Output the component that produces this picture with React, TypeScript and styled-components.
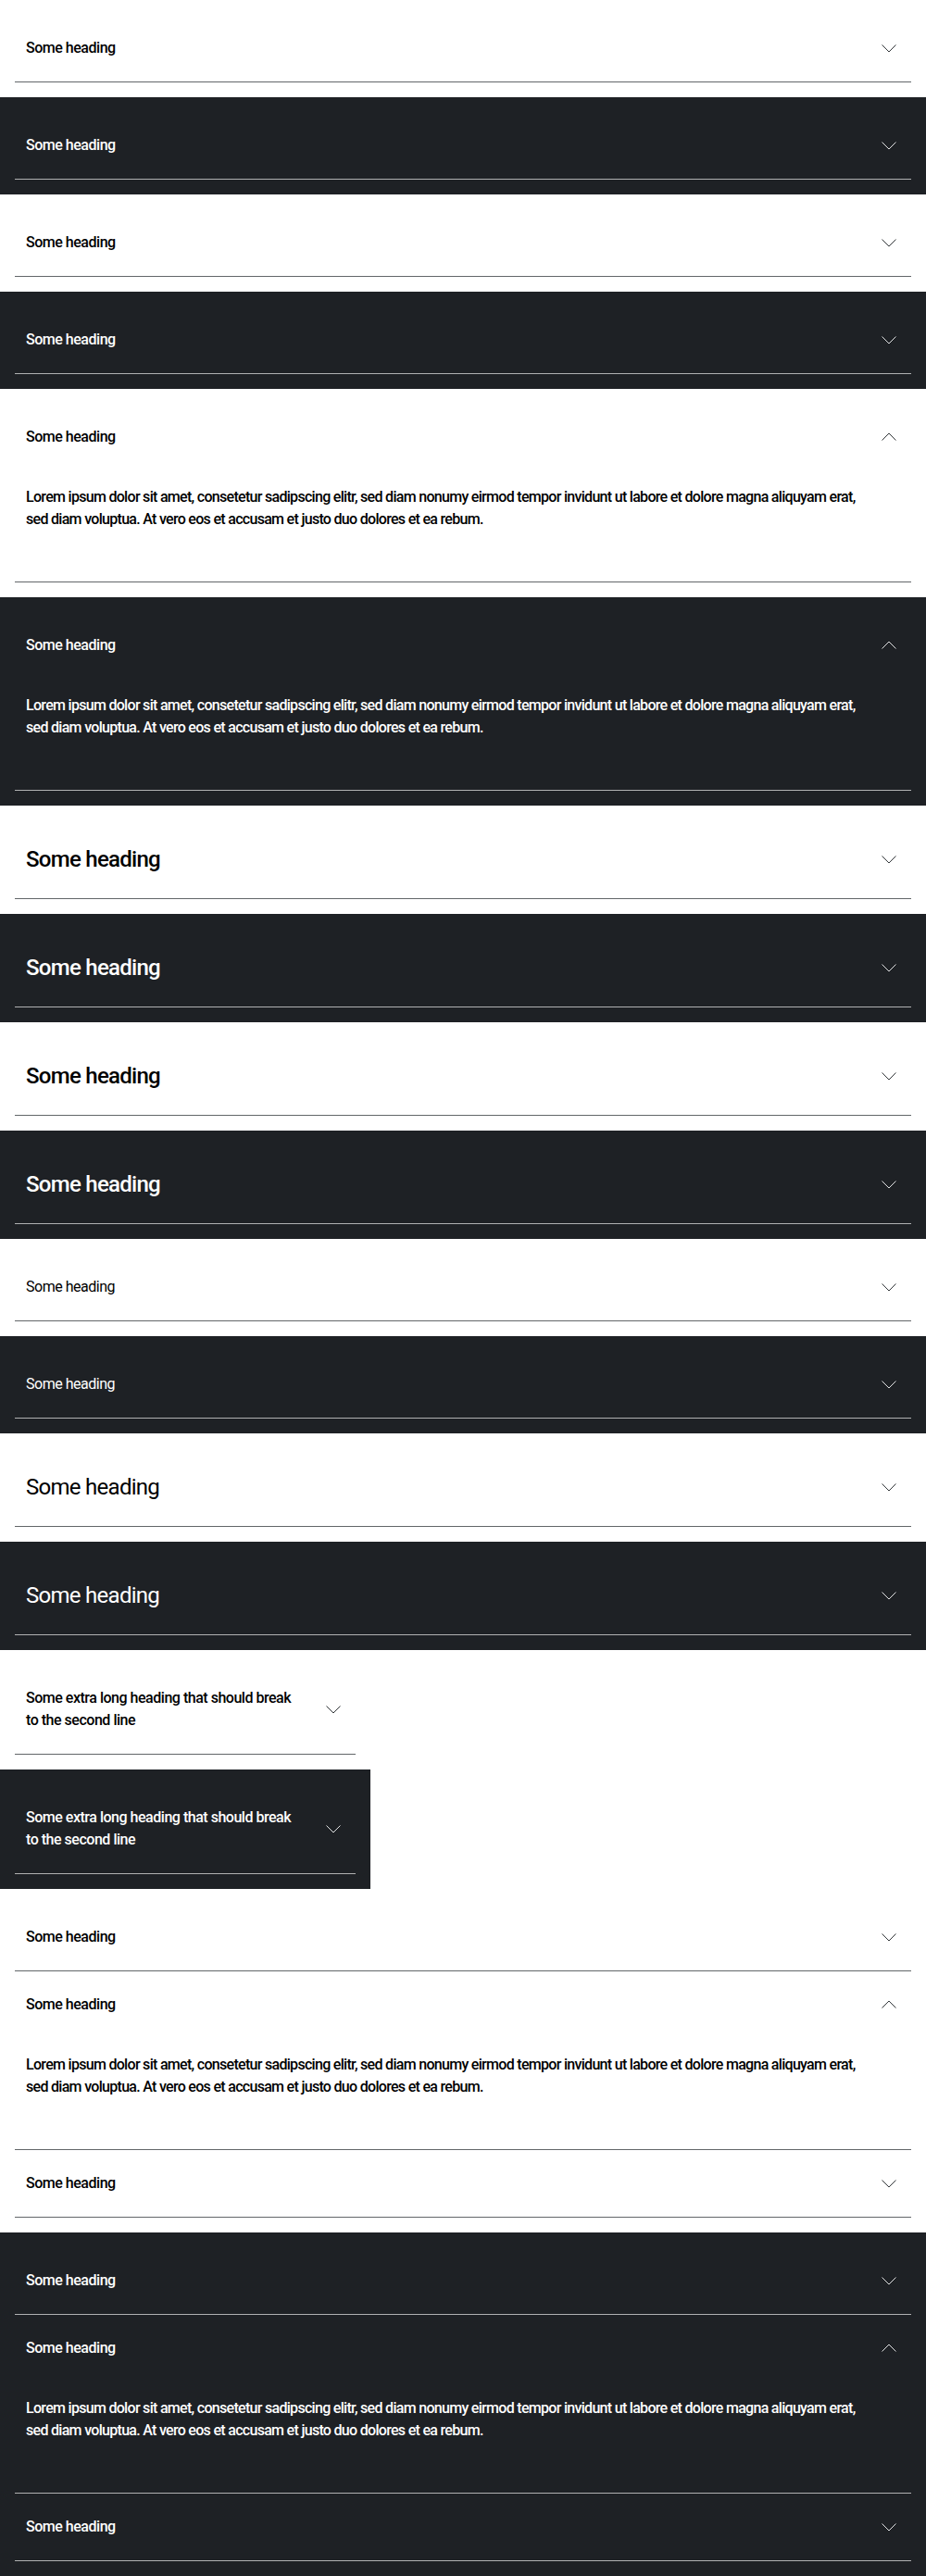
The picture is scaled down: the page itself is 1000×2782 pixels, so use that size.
import React from "react";
import styled, { createGlobalStyle, css } from "styled-components";

type Theme = "light" | "dark";
type Size = "small" | "medium";
type Weight = "regular" | "semibold";

const palette = {
  light: { bg: "#ffffff", text: "#000000", line: "#626669", icon: "#323639" },
  dark: { bg: "#1e2125", text: "#ffffff", line: "#b0b1b2", icon: "#e3e4e5" },
};

const GlobalStyle = createGlobalStyle`
  html, body {
    margin: 0;
    padding: 0;
    background: #ffffff;
  }
  body {
    font-family: Roboto, "Liberation Sans", Arial, sans-serif;
    -webkit-font-smoothing: antialiased;
  }
  * { box-sizing: border-box; }
`;

const Page = styled.main`
  display: flex;
  flex-direction: column;
  width: 1000px;
`;

const Section = styled.section<{ $theme: Theme; $narrow?: boolean }>`
  display: flex;
  flex-direction: column;
  padding: 16px;
  background: ${(p) => palette[p.$theme].bg};
  color: ${(p) => palette[p.$theme].text};
  width: ${(p) => (p.$narrow ? "400px" : "100%")};
`;

const Item = styled.div<{ $theme: Theme }>`
  display: flex;
  flex-direction: column;
  border-bottom: 1px solid ${(p) => palette[p.$theme].line};
`;

const Header = styled.button<{ $theme: Theme }>`
  display: flex;
  align-items: center;
  justify-content: space-between;
  gap: 24px;
  width: 100%;
  margin: 0;
  padding: 24px 12px;
  border: 0;
  background: transparent;
  color: inherit;
  font: inherit;
  text-align: left;
  cursor: pointer;

  svg {
    flex: 0 0 24px;
    color: ${(p) => palette[p.$theme].icon};
  }
`;

const Title = styled.span<{ $size: Size; $weight: Weight }>`
  flex: 1 1 auto;
  font-family: Roboto, "Liberation Sans", Arial, sans-serif;
  font-weight: ${(p) => (p.$weight === "semibold" ? 500 : 400)};
  letter-spacing: -0.03em;
  ${(p) =>
    p.$size === "medium"
      ? css`
          font-size: 24px;
          line-height: 36px;
        `
      : css`
          font-size: 16px;
          line-height: 24px;
        `}
`;

const Content = styled.div`
  padding: 17px 36px 55px 12px;
  font-family: Roboto, "Liberation Sans", Arial, sans-serif;
  font-size: 16px;
  line-height: 24px;
  font-weight: 500;
  letter-spacing: -0.7px;
`;

const Chevron: React.FC<{ open?: boolean }> = ({ open }) => (
  <svg width="24" height="24" viewBox="0 0 24 24" fill="none" aria-hidden="true">
    <path
      d={open ? "M4.5 15.5 L12 8 L19.5 15.5" : "M4.5 8.5 L12 16 L19.5 8.5"}
      stroke="currentColor"
      strokeWidth="1"
      fill="none"
    />
  </svg>
);

const LOREM =
  "Lorem ipsum dolor sit amet, consetetur sadipscing elitr, sed diam nonumy eirmod tempor invidunt ut labore et dolore magna aliquyam erat, sed diam voluptua. At vero eos et accusam et justo duo dolores et ea rebum.";

interface AccordionProps {
  theme: Theme;
  heading?: string;
  size?: Size;
  weight?: Weight;
  open?: boolean;
}

const Accordion: React.FC<AccordionProps> = ({
  theme,
  heading = "Some heading",
  size = "small",
  weight = "semibold",
  open = false,
}) => (
  <Item $theme={theme}>
    <Header $theme={theme} type="button" aria-expanded={open}>
      <Title $size={size} $weight={weight}>
        {heading}
      </Title>
      <Chevron open={open} />
    </Header>
    {open && <Content>{LOREM}</Content>}
  </Item>
);

interface Block {
  theme: Theme;
  narrow?: boolean;
  items: AccordionProps[];
}

const LONG = "Some extra long heading that should break to the second line";

const single = (theme: Theme, props: Omit<AccordionProps, "theme"> = {}, narrow = false): Block => ({
  theme,
  narrow,
  items: [{ theme, ...props }],
});

const group = (theme: Theme): Block => ({
  theme,
  items: [{ theme }, { theme, open: true }, { theme }],
});

const blocks: Block[] = [
  single("light"),
  single("dark"),
  single("light"),
  single("dark"),
  single("light", { open: true }),
  single("dark", { open: true }),
  single("light", { size: "medium" }),
  single("dark", { size: "medium" }),
  single("light", { size: "medium" }),
  single("dark", { size: "medium" }),
  single("light", { weight: "regular" }),
  single("dark", { weight: "regular" }),
  single("light", { size: "medium", weight: "regular" }),
  single("dark", { size: "medium", weight: "regular" }),
  single("light", { heading: LONG }, true),
  single("dark", { heading: LONG }, true),
  group("light"),
  group("dark"),
];

export default function App() {
  return (
    <>
      <GlobalStyle />
      <Page>
        {blocks.map((b, i) => (
          <Section key={i} $theme={b.theme} $narrow={b.narrow}>
            {b.items.map((it, j) => (
              <Accordion key={j} {...it} />
            ))}
          </Section>
        ))}
      </Page>
    </>
  );
}
